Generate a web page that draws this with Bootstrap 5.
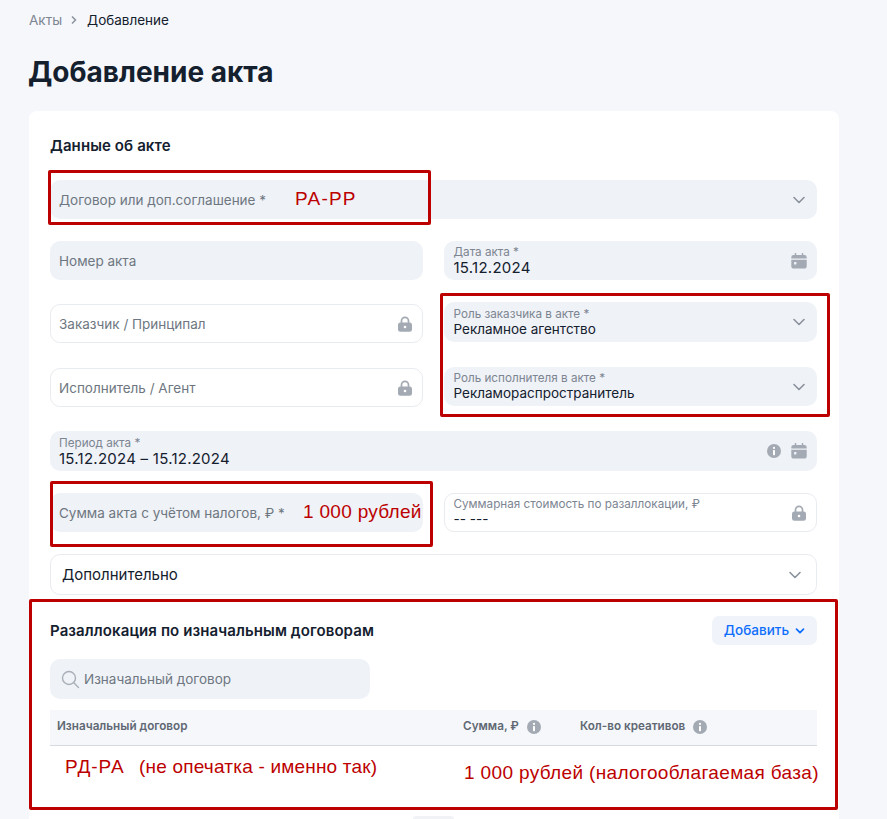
<!DOCTYPE html>
<html lang="ru"><head><meta charset="utf-8">
<link href="https://cdn.jsdelivr.net/npm/bootstrap@5.3.0/dist/css/bootstrap.min.css" rel="stylesheet">
<style>
html,body{height:819px;overflow:hidden}
body{background:#f5f7fb;font-family:Inter,"Liberation Sans",sans-serif;font-size:13.5px;color:#14202e;position:relative}
.pg{padding:0 48px 0 29px;height:819px;overflow:hidden}
.crumbs{height:40px;align-items:center}
.c-link{color:#7c8591}
.c-cur{color:#14202e}
.crumbs svg{margin:0 9px 0 8px}
.ttl{font-size:28px;font-weight:700;line-height:36px;margin:14px 0 21px -1px;color:#14202e}
.sheet{border:0;border-radius:8px 8px 0 0;padding:21px 22px 0 21px;height:708px;background:#fff}
.hd{font-size:15px;font-weight:600;line-height:28px;margin:0;color:#14202e;letter-spacing:.1px}
.fld{height:39px;border-radius:10px;background:#eff2f7;padding:0 9px;color:#6e7781;flex:none}
.fld>span{padding-top:2px}
.fld.tall{height:40px}
.fld.out{background:#fff;border:1px solid #e8ebf0;padding:0 8px}
.lbl{font-size:11.7px;line-height:14px;color:#7c8591;display:block}
.val{font-size:13.5px;line-height:17px;color:#14202e;display:block}
.val.dt{font-size:15px;letter-spacing:.25px}
.ico{flex:none}
.i-chev{margin-right:2px}
.i-cal,.i-lock{margin-right:1px}
.first{margin-top:20px}
.cols{margin-top:22px;gap:21px}
.col-l,.col-r,.w-half{width:373px}
.col-r .fld{padding-left:9.5px}
.col-l .fld:nth-child(2){margin-top:24px}
.col-l .fld:nth-child(3){margin-top:25px}
.col-r .fld:nth-child(2){margin-top:22px}
.col-r .fld:nth-child(3){margin-top:25px}
.per{margin-top:24px}
.peric{gap:10px}
.sumrow{margin-top:22px;gap:21px}
.sumrow .fld.out{padding-left:8.5px}
.more{height:41px;margin-top:22px;border:1px solid #e8ebf0;border-radius:10px;padding:0 14px 0 11px;font-size:15px;color:#14202e}
.more>span{padding-top:2px}
.sec2{margin-top:21px;height:29px}
.sec2 .hd{margin-top:1px}
.addbtn{background:#f0f3f9;color:#0d6efd;border:0;border-radius:7px;height:29px;width:105px;padding:0;font-size:13.5px;font-weight:500;line-height:1;gap:6px}
.addbtn:hover{background:#f0f3f9;color:#0d6efd}
.srch{width:320px;height:40px;border-radius:10px;background:#eff2f7;color:#6e7781;padding:0 11px;margin-top:14px;gap:4px}
.srch>span{padding-top:1px}
.tbl{width:767px;margin:11px 0 0;table-layout:fixed}
.tbl th{background:#f5f7fb;color:#5f6873;font-size:11.7px;font-weight:600;height:35px;padding:0 7px;vertical-align:middle;border-bottom:1px solid #d5d9e0;box-shadow:none}
.tbl td{height:54px;border:0;padding:0}
.th1{width:406px}
.th2{width:117px}
.pgn{position:absolute;left:413px;top:816px;width:41px;height:3px;border-radius:8px 8px 0 0;background:#f0f2f6}
.rbox{position:absolute;border:3px solid #bc0000;border-radius:2px;pointer-events:none}
.rb1{left:48px;top:170px;width:383px;height:55px}
.rb2{left:440px;top:293px;width:390px;height:124px}
.rb3{left:50px;top:481px;width:383px;height:66px}
.rb4{left:29px;top:599px;width:809px;height:211px}
.note{position:absolute;color:#bc0000;font-family:"Liberation Sans",sans-serif;font-size:19px;line-height:22px;white-space:nowrap}
.n1{left:295px;top:188px;letter-spacing:1.2px}
.n2{left:303px;top:501px;letter-spacing:.3px}
.n3{left:65px;top:756px;letter-spacing:1px}
.n4{left:139px;top:756px;letter-spacing:.2px}
.n5{left:464px;top:762px;letter-spacing:.35px}
</style></head><body>
<svg width="0" height="0" class="position-absolute">
<defs>
<symbol id="chev" viewBox="0 0 14 14"><path d="M2 4.500 7 9.500 12 4.500" fill="none" stroke="#8a929c" stroke-width="1.600" stroke-linecap="round" stroke-linejoin="round"/></symbol>
<symbol id="cal" viewBox="0 0 16 16"><path d="M4.500 0.600v2.400M11.500 0.600v2.400" stroke="#a4aab3" stroke-width="1.500" stroke-linecap="round"/><path d="M2.500 2h11A2.200 2.200 0 0 1 15.700 4.200V5.500H.3V4.200A2.200 2.200 0 0 1 2.500 2Z" fill="#a4aab3"/><path d="M.3 6.700H15.700V13A2.600 2.600 0 0 1 13.100 15.600H2.900A2.600 2.600 0 0 1 .3 13Z" fill="#a4aab3"/><rect x="3" y="9" width="2.400" height="2.400" rx=".4" fill="#eff2f7"/></symbol>
<symbol id="lock" viewBox="0 0 16 16"><path d="M4.500 7V4.800a3.500 3.500 0 0 1 7 0V7" fill="none" stroke="#a4aab3" stroke-width="1.700"/><rect x="1" y="6.400" width="14" height="9.400" rx="2.400" fill="#a4aab3"/><circle cx="8" cy="11" r="1.300" fill="#fff"/></symbol>
<symbol id="inf" viewBox="0 0 14 14"><circle cx="7" cy="7" r="7" fill="#a4aab3"/><circle cx="7" cy="3.900" r="1.100" fill="#fff"/><rect x="6" y="6" width="2" height="5.200" rx=".6" fill="#fff"/></symbol>
</defs></svg>

<div class="pg">
<nav class="d-flex crumbs" aria-label="breadcrumb"><span class="c-link">Акты</span><svg width="8" height="10" viewBox="0 0 8 10"><path d="M2 1.500 5.500 5 2 8.500" fill="none" stroke="#8a929c" stroke-width="1.500"/></svg><span class="c-cur">Добавление</span></nav>
<h1 class="ttl">Добавление акта</h1>
<div class="card sheet">
  <h2 class="hd">Данные об акте</h2>
  <div class="fld first d-flex align-items-center justify-content-between"><span>Договор или доп.соглашение *</span><svg class="ico i-chev" width="14" height="14"><use href="#chev"/></svg></div>

  <div class="d-flex cols">
    <div class="d-flex flex-column col-l">
      <div class="fld d-flex align-items-center"><span>Номер акта</span></div>
      <div class="fld out d-flex align-items-center justify-content-between"><span>Заказчик / Принципал</span><svg class="ico i-lock" width="16" height="16"><use href="#lock"/></svg></div>
      <div class="fld out d-flex align-items-center justify-content-between"><span>Исполнитель / Агент</span><svg class="ico i-lock" width="16" height="16"><use href="#lock"/></svg></div>
    </div>
    <div class="d-flex flex-column col-r">
      <div class="fld d-flex align-items-center justify-content-between"><div><span class="lbl">Дата акта *</span><span class="val dt">15.12.2024</span></div><svg class="ico i-cal" width="16" height="16"><use href="#cal"/></svg></div>
      <div class="fld tall d-flex align-items-center justify-content-between"><div><span class="lbl">Роль заказчика в акте *</span><span class="val">Рекламное агентство</span></div><svg class="ico i-chev" width="14" height="14"><use href="#chev"/></svg></div>
      <div class="fld d-flex align-items-center justify-content-between"><div><span class="lbl">Роль исполнителя в акте *</span><span class="val">Рекламораспространитель</span></div><svg class="ico i-chev" width="14" height="14"><use href="#chev"/></svg></div>
    </div>
  </div>

  <div class="fld tall per d-flex align-items-center justify-content-between"><div><span class="lbl">Период акта *</span><span class="val dt">15.12.2024 – 15.12.2024</span></div><div class="d-flex align-items-center peric"><svg class="ico" width="14" height="14"><use href="#inf"/></svg><svg class="ico i-cal" width="16" height="16"><use href="#cal"/></svg></div></div>

  <div class="d-flex sumrow">
    <div class="fld w-half d-flex align-items-center"><span>Сумма акта с учётом налогов, ₽ *</span></div>
    <div class="fld out w-half d-flex align-items-center justify-content-between"><div><span class="lbl">Суммарная стоимость по разаллокации, ₽</span><span class="val">-- ---</span></div><svg class="ico i-lock" width="16" height="16"><use href="#lock"/></svg></div>
  </div>

  <div class="more d-flex align-items-center justify-content-between"><span>Дополнительно</span><svg class="ico" width="14" height="14"><use href="#chev"/></svg></div>

  <div class="d-flex align-items-center justify-content-between sec2"><h2 class="hd">Разаллокация по изначальным договорам</h2><button type="button" class="btn addbtn d-flex align-items-center justify-content-center"><span>Добавить</span><svg width="10" height="10" viewBox="0 0 10 10"><path d="M1.500 3.200 5 6.700 8.500 3.200" fill="none" stroke="#0d6efd" stroke-width="1.700" stroke-linecap="round" stroke-linejoin="round"/></svg></button></div>
  <div class="srch d-flex align-items-center"><svg class="ico" width="19" height="19" viewBox="0 0 19 19"><circle cx="8" cy="8" r="6.500" fill="none" stroke="#a9afb8" stroke-width="1.400"/><path d="M12.800 12.800 17.500 17.500" stroke="#a9afb8" stroke-width="1.400" stroke-linecap="round"/></svg><span>Изначальный договор</span></div>
  <table class="table tbl"><thead><tr><th class="th1">Изначальный договор</th><th class="th2"><span class="d-inline-flex align-items-center gap-2">Сумма, ₽ <svg width="14" height="14"><use href="#inf"/></svg></span></th><th><span class="d-inline-flex align-items-center gap-2">Кол-во креативов <svg width="14" height="14"><use href="#inf"/></svg></span></th></tr></thead><tbody><tr><td></td><td></td><td></td></tr></tbody></table>
</div>
</div>
<div class="pgn"></div>
<div class="rbox rb1"></div>
<div class="rbox rb2"></div>
<div class="rbox rb3"></div>
<div class="rbox rb4"></div>
<div class="note n1">РА-РР</div>
<div class="note n2">1 000 рублей</div>
<div class="note n3">РД-РА</div>
<div class="note n4">(не опечатка - именно так)</div>
<div class="note n5">1 000 рублей (налогооблагаемая база)</div>
</body></html>
